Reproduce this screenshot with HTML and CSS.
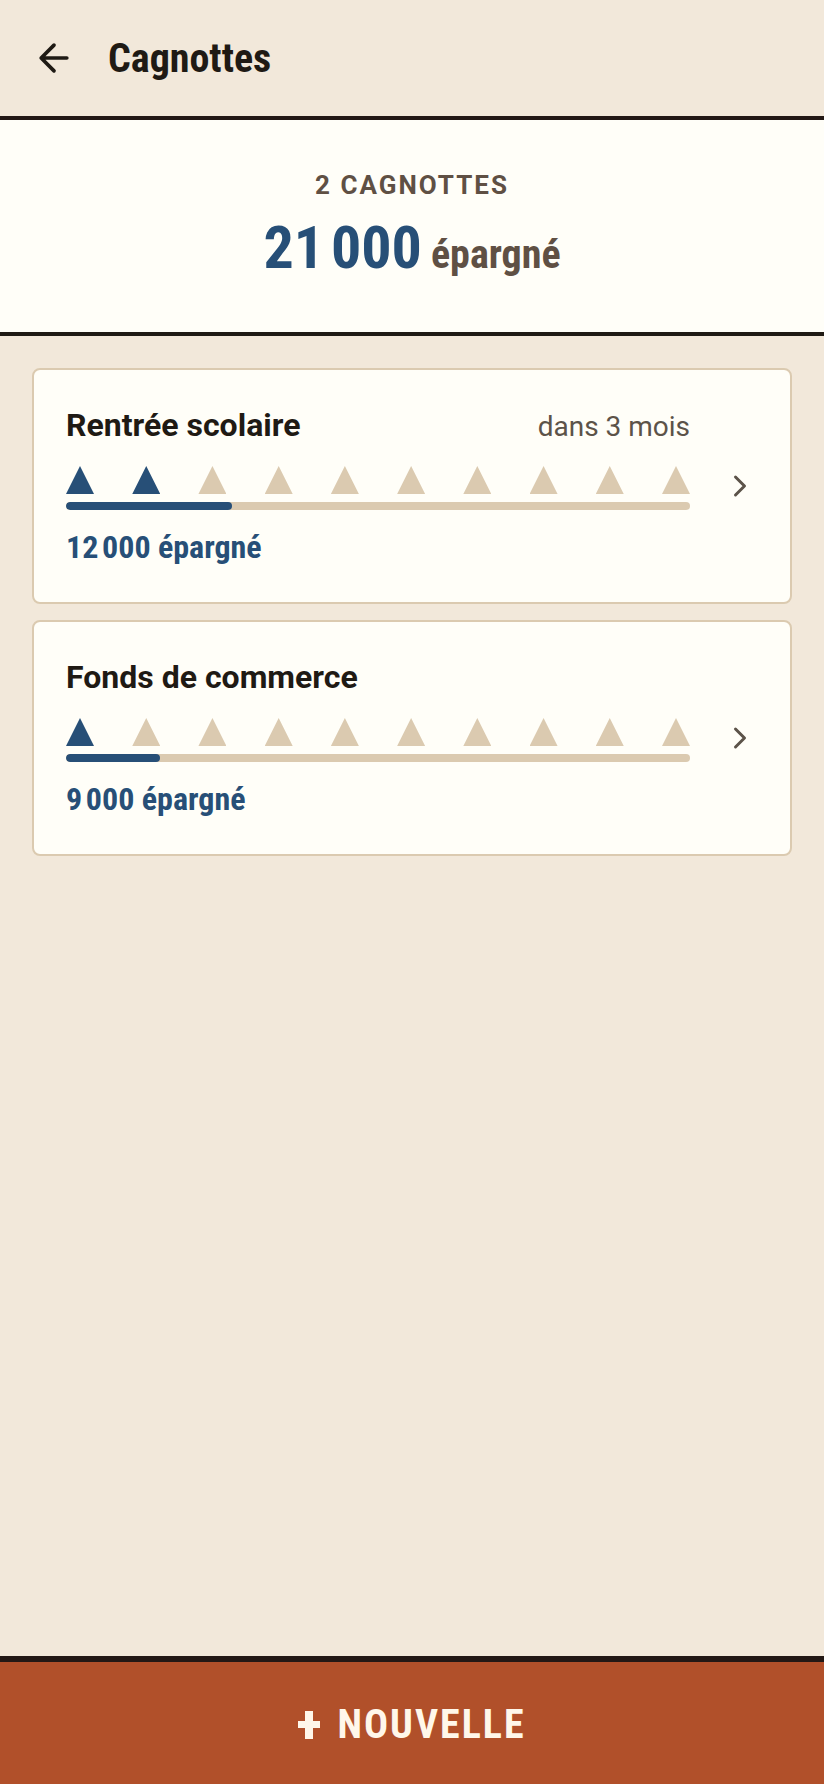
FILE: index.html
```html
<!DOCTYPE html>
<html lang="fr">
<head>
<meta charset="utf-8">
<meta name="viewport" content="width=device-width, initial-scale=1">
<title>Cagnottes</title>
<link rel="stylesheet" href="styles.css">
</head>
<body class="app">
<header class="topbar">
  <button class="back" type="button" aria-label="Retour">
    <svg class="back-icon" viewBox="0 0 24 24" aria-hidden="true"><path d="M12 19l-7-7 7-7M5 12h14"/></svg>
  </button>
  <h1 class="title">Cagnottes</h1>
</header>
<section class="summary">
  <p class="summary-label">2 CAGNOTTES</p>
  <p class="summary-total"><span class="amount">21&#8239;000</span> <span class="unit">épargné</span></p>
</section>
<main class="list">
  <a class="card" href="#rentree">
    <div class="card-body">
      <div class="card-head"><h2 class="name">Rentrée scolaire</h2><span class="due">dans 3 mois</span></div>
      <div class="marks"><i class="mark on"></i><i class="mark on"></i><i class="mark"></i><i class="mark"></i><i class="mark"></i><i class="mark"></i><i class="mark"></i><i class="mark"></i><i class="mark"></i><i class="mark"></i></div>
      <div class="track"><div class="fill" style="width:26.67%"></div></div>
      <p class="saved">12&#8239;000 épargné</p>
    </div>
    <svg class="chevron" viewBox="0 0 24 24" aria-hidden="true"><path d="M9 18l6-6-6-6"/></svg>
  </a>
  <a class="card" href="#fonds">
    <div class="card-body">
      <div class="card-head"><h2 class="name">Fonds de commerce</h2></div>
      <div class="marks"><i class="mark on"></i><i class="mark"></i><i class="mark"></i><i class="mark"></i><i class="mark"></i><i class="mark"></i><i class="mark"></i><i class="mark"></i><i class="mark"></i><i class="mark"></i></div>
      <div class="track"><div class="fill" style="width:15%"></div></div>
      <p class="saved">9&#8239;000 épargné</p>
    </div>
    <svg class="chevron" viewBox="0 0 24 24" aria-hidden="true"><path d="M9 18l6-6-6-6"/></svg>
  </a>
</main>
<button class="create" type="button"><svg class="plus" viewBox="0 0 22 28" aria-hidden="true"><path d="M7 0h8v10h7v7h-7v11H7V17H0v-7h7z"/></svg>NOUVELLE</button>
</body>
</html>
```
FILE: styles.css
```css
* { box-sizing: border-box; }
.app {
  --ink: #1f1a14;
  --muted: #5f5044;
  --blue: #274f77;
  --sand: #dbcab0;
  --paper: #fffef8;
  --condensed: "Roboto Condensed", Roboto, sans-serif;
  margin: 0;
  min-height: 100vh;
  display: flex;
  flex-direction: column;
  background: #f2e8da;
  color: var(--ink);
  font-family: Roboto, sans-serif;
}
h1, h2, p { margin: 0; }
.topbar {
  display: flex;
  align-items: center;
  gap: 32px;
  padding: 28px 32px;
  border-bottom: 4px solid #231815;
}
.back {
  display: flex;
  padding: 0;
  border: 0;
  background: none;
  color: inherit;
}
.back-icon, .chevron {
  fill: none;
  stroke: currentColor;
  stroke-width: 2;
  stroke-linecap: round;
  stroke-linejoin: round;
}
.back-icon { width: 44px; height: 44px; }
.title {
  padding-top: 2px;
  font: 700 40px/58px var(--condensed);
}
.summary {
  padding: 44px 32px 50px;
  border-bottom: 4px solid var(--ink);
  background: var(--paper);
  text-align: center;
}
.summary-label {
  color: var(--muted);
  font-size: 26px;
  font-weight: 700;
  line-height: 42px;
  letter-spacing: 2px;
}
.summary-total {
  display: flex;
  align-items: baseline;
  justify-content: center;
  gap: 9px;
  margin-top: 8px;
  font-family: var(--condensed);
  font-weight: 700;
}
.amount { color: var(--blue); font-size: 60px; line-height: 68px; }
.unit { color: var(--muted); font-size: 40px; line-height: 48px; }
.list {
  flex: 1;
  display: flex;
  flex-direction: column;
  gap: 16px;
  padding: 32px;
}
.card {
  display: flex;
  align-items: center;
  gap: 32px;
  padding: 32px;
  border: 2px solid var(--sand);
  border-radius: 8px;
  background: var(--paper);
  color: inherit;
  text-decoration: none;
}
.card-body { flex: 1; }
.card-head {
  display: flex;
  align-items: baseline;
  justify-content: space-between;
  margin-bottom: 18px;
}
.name { font-size: 32px; font-weight: 700; line-height: 46px; }
.due { color: #5c5349; font-size: 28px; line-height: 40px; }
.marks { display: flex; justify-content: space-between; margin-bottom: 8px; }
.mark {
  width: 28px;
  height: 28px;
  background: var(--sand);
  clip-path: polygon(50% 0, 100% 100%, 0 100%);
}
.mark.on { background: var(--blue); }
.track {
  height: 8px;
  margin-bottom: 14px;
  border-radius: 4px;
  background: var(--sand);
  overflow: hidden;
}
.fill { height: 100%; border-radius: 4px; background: var(--blue); }
.saved {
  color: var(--blue);
  font: 700 32px/46px var(--condensed);
}
.chevron { flex: none; width: 36px; height: 36px; color: #5c5349; }
.create {
  display: flex;
  align-items: center;
  justify-content: center;
  gap: 17px;
  padding: 34px 32px 30px;
  border: 0;
  border-top: 6px solid #231815;
  background: #b1502a;
  color: #fff7ea;
  font: 700 40px/58px var(--condensed);
  letter-spacing: 2px;
}
.plus { width: 22px; height: 28px; fill: currentColor; }
```
